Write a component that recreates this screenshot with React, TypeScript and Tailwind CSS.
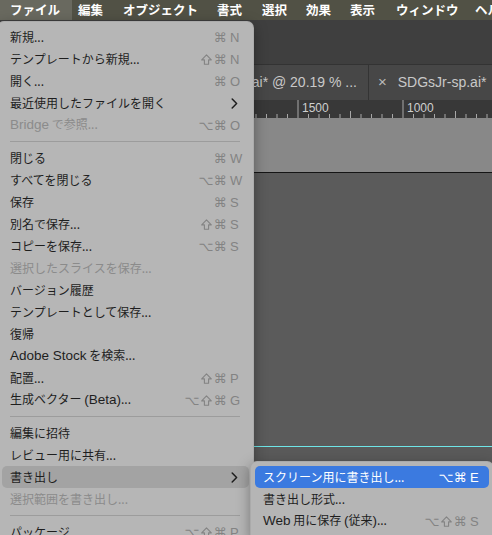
import React from 'react';

const CJK = "font-['Noto_Sans_CJK_JP',sans-serif]";

function L({ children }: { children: React.ReactNode }) {
  return <span className="font-['Liberation_Sans',sans-serif] text-[13.5px]">{children}</span>;
}

function ShiftIcon() {
  return (
    <svg width="11" height="11" viewBox="0 0 11 11" className="block">
      <path d="M5.5 0.9 L10.3 5.9 H7.6 V10.2 H3.4 V5.9 H0.7 Z" fill="none" stroke="currentColor" strokeWidth="1.1" strokeLinejoin="round" />
    </svg>
  );
}

function Shortcut({ mods, k, tone }: { mods: string; k: string; tone: string }) {
  return (
    <div className={`flex items-center ${tone}`}>
      {Array.from(mods).map((m, i) => (
        <span key={i} className="w-[14px] flex justify-center font-['DejaVu_Sans',sans-serif] text-[13px] leading-none">
          {m === '⇧' ? <ShiftIcon /> : m}
        </span>
      ))}
      <span className="w-[11px] ml-[3px] font-['Liberation_Sans',sans-serif] text-[13px] leading-none">{k}</span>
    </div>
  );
}

function Chevron({ color }: { color: string }) {
  return (
    <svg width="7" height="11" viewBox="0 0 7 11" className="mr-[3px]">
      <path d="M1.2 1 L5.6 5.5 L1.2 10" fill="none" stroke={color} strokeWidth="1.5" strokeLinecap="round" strokeLinejoin="round" />
    </svg>
  );
}

type Row =
  | 'sep'
  | { label: React.ReactNode; sc?: [string, string]; disabled?: boolean; sub?: boolean; hl?: boolean };

const rows: Row[] = [
  { label: '新規...', sc: ['⌘', 'N'] },
  { label: 'テンプレートから新規...', sc: ['⇧⌘', 'N'] },
  { label: '開く...', sc: ['⌘', 'O'] },
  { label: '最近使用したファイルを開く', sub: true },
  { label: <><L>Bridge</L> で参照...</>, sc: ['⌥⌘', 'O'], disabled: true },
  'sep',
  { label: '閉じる', sc: ['⌘', 'W'] },
  { label: 'すべてを閉じる', sc: ['⌥⌘', 'W'] },
  { label: '保存', sc: ['⌘', 'S'] },
  { label: '別名で保存...', sc: ['⇧⌘', 'S'] },
  { label: 'コピーを保存...', sc: ['⌥⌘', 'S'] },
  { label: '選択したスライスを保存...', disabled: true },
  { label: 'バージョン履歴' },
  { label: 'テンプレートとして保存...' },
  { label: '復帰' },
  { label: <><L>Adobe Stock</L> を検索...</> },
  { label: '配置...', sc: ['⇧⌘', 'P'] },
  { label: <>生成ベクター <L>(Beta)</L>...</>, sc: ['⌥⇧⌘', 'G'] },
  'sep',
  { label: '編集に招待' },
  { label: 'レビュー用に共有...' },
  { label: '書き出し', sub: true, hl: true },
  { label: '選択範囲を書き出し...', disabled: true },
  'sep',
  { label: 'パッケージ...', sc: ['⌥⇧⌘', 'P'] },
];

function Ruler() {
  const ticks: React.ReactNode[] = [];
  for (let i = -6; i < 30; i++) {
    const x = 298 + i * 10.5 - 250;
    const isMajor = i % 10 === 0;
    const isMid = Math.abs(i % 10) === 5;
    const h = isMajor ? 18 : isMid ? 7 : 4;
    ticks.push(<line key={i} x1={x} x2={x} y1={18 - h} y2={18} stroke="#a8a8a8" strokeWidth="1" />);
  }
  return (
    <div className="h-[18px] bg-[#383838] flex shrink-0">
      <div className="w-[250px] shrink-0" />
      <div className="relative flex-1">
        <svg width="242" height="18" className="block">
          {ticks}
        </svg>
        <span className="absolute left-[52px] top-[2px] text-[12px] leading-none text-[#cfcfcf] font-['Liberation_Sans',sans-serif]">1500</span>
        <span className="absolute left-[157px] top-[2px] text-[12px] leading-none text-[#cfcfcf] font-['Liberation_Sans',sans-serif]">1000</span>
      </div>
    </div>
  );
}

export default function App() {
  return (
    <div className={`relative w-[492px] h-[535px] overflow-hidden flex flex-col bg-[#5b5b5b] ${CJK}`}>
      {/* menu bar */}
      <div className="h-[20px] shrink-0 bg-[#515145] flex text-white font-bold text-[12.5px] leading-[20px] whitespace-nowrap">
        <div className="w-[72px] shrink-0 pl-[10px] bg-[#69695f]">ファイル</div>
        <div className="w-[45px] shrink-0 pl-[6px]">編集</div>
        <div className="w-[94px] shrink-0 pl-[6px]">オブジェクト</div>
        <div className="w-[45px] shrink-0 pl-[6px]">書式</div>
        <div className="w-[44px] shrink-0 pl-[6px]">選択</div>
        <div className="w-[44px] shrink-0 pl-[6px]">効果</div>
        <div className="w-[46px] shrink-0 pl-[6px]">表示</div>
        <div className="w-[79px] shrink-0 pl-[6px]">ウィンドウ</div>
        <div className="shrink-0 pl-[6px]">ヘルプ</div>
      </div>

      {/* app window */}
      <div className="h-[44px] shrink-0 bg-[#3f3f3f]" />
      <div className="h-[36px] shrink-0 bg-[#474747] border-t border-[#333333] flex items-center text-[14px] text-[#c9c9c9] font-['Liberation_Sans',sans-serif] whitespace-nowrap">
        <div className="w-[369px] shrink-0 h-full flex items-center justify-end pr-[11px] border-r border-[#343434] overflow-hidden">
          SDGsJr-pc.ai* @ 20.19 % ...
        </div>
        <div className="flex items-center h-full">
          <span className="ml-[9px] text-[#b9b9b9] text-[15px]">×</span>
          <span className="ml-[11px]">SDGsJr-sp.ai*</span>
        </div>
      </div>
      <Ruler />
      <div className="h-[54px] shrink-0 bg-[#888888]" />
      <div className="h-px shrink-0 bg-[#151515]" />
      <div className="h-[273px] shrink-0 bg-[#5b5b5b]" />
      <div className="h-px shrink-0 bg-[#6fe6e8]" />
      <div className="flex-1 bg-[#5a5a5a]" />

      {/* file menu */}
      <div className="absolute left-[-3px] top-[21px] w-[257px] h-[540px] rounded-[7px] bg-[#b6b6b6] shadow-[0_4px_14px_rgba(0,0,0,0.35)] border border-[#9a9a9a]/40 pt-[4px] text-[12px]">
        {rows.map((r, i) =>
          r === 'sep' ? (
            <div key={i} className="h-[11px] flex items-center ml-[12px] mr-[13px]">
              <div className="h-px w-full bg-[#9c9c9c]" />
            </div>
          ) : (
            <div
              key={i}
              className={`h-[22px] mx-[4px] rounded-[5px] pl-[8px] pr-[8px] flex items-center justify-between whitespace-nowrap ${
                r.hl ? 'bg-[#a3a3a3]' : ''
              } ${r.disabled ? 'text-[#8b8b8b]' : 'text-[#1e1e1e]'}`}
            >
              <span>{r.label}</span>
              {r.sc && <Shortcut mods={r.sc[0]} k={r.sc[1]} tone="text-[#838383]" />}
              {r.sub && <Chevron color="#1e1e1e" />}
            </div>
          )
        )}
      </div>

      {/* submenu */}
      <div className="absolute left-[250px] top-[461px] w-[244px] h-[80px] rounded-[7px] bg-[#b5b5b5] shadow-[0_4px_14px_rgba(0,0,0,0.35)] border border-[#9a9a9a]/40 pt-[4px] text-[12px]">
        <div className="h-[22px] mx-[4px] rounded-[5px] bg-[#3b7ae0] text-white pl-[8px] pr-[8px] flex items-center justify-between whitespace-nowrap">
          <span>スクリーン用に書き出し...</span>
          <Shortcut mods="⌥⌘" k="E" tone="text-white" />
        </div>
        <div className="h-[22px] mx-[4px] pl-[8px] pr-[8px] flex items-center text-[#1e1e1e] whitespace-nowrap">
          <span>書き出し形式...</span>
        </div>
        <div className="h-[22px] mx-[4px] pl-[8px] pr-[8px] flex items-center justify-between text-[#1e1e1e] whitespace-nowrap">
          <span>
            <L>Web</L> 用に保存 <L>(</L>従来<L>)</L>...
          </span>
          <Shortcut mods="⌥⇧⌘" k="S" tone="text-[#838383]" />
        </div>
      </div>
    </div>
  );
}
